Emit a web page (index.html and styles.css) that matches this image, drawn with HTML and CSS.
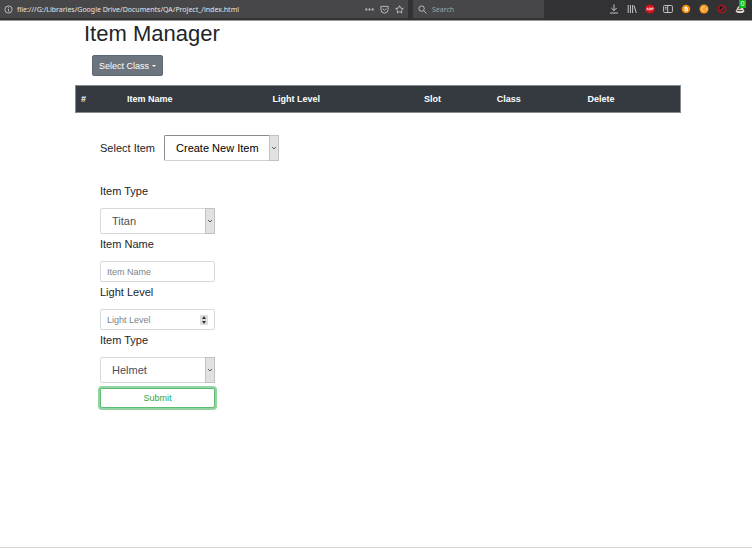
FILE: index.html
```html
<!DOCTYPE html>
<html lang="en">
<head>
<meta charset="utf-8">
<title>Item Manager</title>
<link rel="stylesheet" href="styles.css">
</head>
<body>
<header class="toolbar">
  <div class="address">
    <svg class="icon" viewBox="0 0 10 10" aria-hidden="true"><circle cx="5" cy="5" r="4"/><path d="M5 4.5v2.8M5 2.6v1"/></svg>
    <input class="url" type="text" aria-label="Address" value="file:///G:/Libraries/Google Drive/Documents/QA/Project_/index.html">
    <div class="actions">
      <button type="button" aria-label="Page actions"><svg class="icon" viewBox="0 0 10 10"><path class="solid" d="M.5 4h2v2h-2zM4 4h2v2H4zM7.500 4h2v2h-2z"/></svg></button>
      <button type="button" aria-label="Save to Pocket"><svg class="icon" viewBox="0 0 10 10"><path d="M1 1.500h8v3.500a4 4 0 0 1-8 0zM3 4l2 2 2-2"/></svg></button>
      <button type="button" aria-label="Bookmark"><svg class="icon" viewBox="0 0 10 10"><path d="M5 .8l1.300 2.700 2.900.4-2.100 2 .5 2.900L5 7.400 2.400 8.800l.5-2.900-2.100-2 2.900-.4z"/></svg></button>
    </div>
  </div>
  <label class="search">
    <svg class="icon" viewBox="0 0 10 10" aria-hidden="true"><circle cx="4" cy="4" r="3"/><path d="M6.200 6.200l3.200 3.200"/></svg>
    <input class="query" type="text" placeholder="Search" aria-label="Search">
  </label>
  <nav class="tools">
    <button type="button" aria-label="Downloads"><svg class="icon" viewBox="0 0 10 10"><path d="M5 .5v6M2.300 4L5 6.700 7.700 4M1 9h8"/></svg></button>
    <button type="button" aria-label="Library"><svg class="icon" viewBox="0 0 10 10"><path d="M1.200 1v8M3.400 1v8M5.600 1v8M7 1.500l2.300 7.500"/></svg></button>
    <button type="button" aria-label="Ad blocker"><svg class="icon" viewBox="0 0 10 10"><path fill="#d8121c" stroke="none" d="M3 .8h4L9.500 3v4L7 9.200H3L.5 7V3z"/><path stroke="#fff" stroke-width=".7" d="M1.700 6.200l.8-2.400.8 2.400M4.200 3.900v2.200h.7c1 0 1-2.200 0-2.200zM6.700 6.300V3.900h1c.8 0 .8 1.200 0 1.200h-1"/></svg></button>
    <button type="button" aria-label="Sidebar"><svg class="icon" viewBox="0 0 10 10"><rect x=".6" y="1.500" width="8.800" height="7" rx="1"/><path d="M4.700 1.500v7M2 3.500h1.500M2 5h1.500"/></svg></button>
    <button type="button" aria-label="Orange extension"><svg class="icon" viewBox="0 0 10 10"><circle cx="5" cy="5" r="4.300" fill="#f58a0b" stroke="none"/><path fill="#fff" stroke="none" d="M3.500 2.800h2L7 4.200v3H3.500z"/><circle cx="5.200" cy="5.200" r=".8" fill="#f58a0b" stroke="none"/></svg></button>
    <button type="button" aria-label="Cookie extension"><svg class="icon" viewBox="0 0 10 10"><circle cx="5" cy="5" r="4.500" fill="#f39a24" stroke="none"/><path stroke="#ffe3b5" d="M5.500 3.200a2 2 0 1 0 0 3.600M6.500 5h1.800"/></svg></button>
    <button type="button" aria-label="Blocked content"><svg class="icon" viewBox="0 0 10 10"><ellipse cx="5" cy="5" rx="4" ry="3.600" stroke="#b4101a" stroke-width="1.300"/><path stroke="#b4101a" stroke-width="1.300" d="M2 7l6-4"/><path fill="#090909" stroke="none" d="M3 3h2.500L3 5.500z"/></svg></button>
    <button type="button" class="badged" aria-label="Notifications"><svg class="icon" viewBox="0 0 10 10"><path fill="#ddd6cd" stroke="none" d="M.5 7.500L3 2.500l4-1 2.500 6-2 1.500h-5z"/><path stroke="#4a4038" d="M2 6.500h5.500M3.500 4.500L6 4"/></svg><span class="badge">0</span></button>
  </nav>
</header>
<main class="page">
  <h1>Item Manager</h1>
  <button type="button" class="dropdown">Select Class<span class="caret"></span></button>
  <table class="items">
    <colgroup><col class="c-num"><col class="c-name"><col class="c-light"><col class="c-slot"><col class="c-class"><col class="c-delete"></colgroup>
    <thead><tr><th>#</th><th>Item Name</th><th>Light Level</th><th>Slot</th><th>Class</th><th>Delete</th></tr></thead>
  </table>
  <form class="editor">
    <div class="chooser">
      <label for="item">Select Item</label>
      <div class="select native">
        <select id="item"><option>Create New Item</option></select>
        <svg class="arrow" viewBox="0 0 8 24" aria-hidden="true"><path d="M2 11l2 2 2-2"/></svg>
      </div>
    </div>
    <label for="guardian">Item Type</label>
    <div class="select">
      <select id="guardian"><option>Titan</option></select>
      <svg class="arrow" viewBox="0 0 8 24" aria-hidden="true"><path d="M2 11l2 2 2-2"/></svg>
    </div>
    <label for="name">Item Name</label>
    <input class="field" id="name" type="text" placeholder="Item Name">
    <label for="light">Light Level</label>
    <div class="number">
      <input class="field" id="light" type="number" placeholder="Light Level">
      <svg class="spin" viewBox="0 0 8 10" aria-hidden="true"><path class="plate" d="M0 0h8v10H0z"/><path d="M2 4l2-3 2 3zM2 6l2 3 2-3z"/></svg>
    </div>
    <label for="slot">Item Type</label>
    <div class="select">
      <select id="slot"><option>Helmet</option></select>
      <svg class="arrow" viewBox="0 0 8 24" aria-hidden="true"><path d="M2 11l2 2 2-2"/></svg>
    </div>
    <button type="button" class="submit">Submit</button>
  </form>
</main>
</body>
</html>
```
FILE: styles.css
```css
* { box-sizing: border-box; }
body {
  margin: 0;
  min-height: 100vh;
  display: flex;
  flex-direction: column;
  background: #fff;
  border-bottom: 1px solid #dcd6d4;
  color: #212529;
  font-family: "Liberation Sans", Arial, sans-serif;
  font-size: 11px;
}
button, input, select { font: inherit; margin: 0; }

.toolbar {
  display: flex;
  height: 21px;
  padding-bottom: 2px;
  background: #323234;
  border-bottom: 1px solid #98989a;
  color: #d0d0d2;
  font-family: "Noto Sans", "Open Sans", sans-serif;
  font-size: 7px;
}
.address, .search {
  display: flex;
  align-items: center;
  background: #474749;
}
.address { flex: 0 0 408px; padding: 0 4px; gap: 4px; }
.search { flex: 0 0 131px; margin-left: 5px; padding: 0 5px; gap: 5px; }
.url, .query {
  flex: 1;
  min-width: 0;
  padding: 0;
  border: 0;
  background: none;
  color: #e4e4e6;
}
.query::placeholder { color: #a2a2a4; opacity: 1; }
.icon {
  display: block;
  width: 9px;
  height: 9px;
  flex: none;
  fill: none;
  stroke: #c4c4c6;
}
.icon .solid { fill: #c4c4c6; stroke: none; }
.toolbar button { padding: 0; border: 0; background: none; }
.actions { display: flex; gap: 6px; }
.tools {
  display: flex;
  align-items: center;
  gap: 8px;
  margin-left: auto;
  padding-right: 7px;
}
.tools .icon { width: 10px; height: 10px; }
.toolbar .badged { position: relative; }
.badge {
  position: absolute;
  top: -4px;
  right: -1px;
  width: 7px;
  background: #08c018;
  color: #fff;
  line-height: 8px;
}

.page { padding: 0 71px 0 75px; }
h1 {
  margin: 0 0 8px;
  padding-left: 9px;
  font-size: 22px;
  font-weight: 400;
  line-height: 26px;
}
.dropdown {
  display: flex;
  align-items: center;
  gap: 3px;
  height: 21px;
  margin-left: 17px;
  padding: 0 6px;
  border: 1px solid #5f6973;
  border-radius: 2px;
  background: #6c757d;
  color: #fff;
  font-size: 9px;
}
.caret {
  border: 2px solid transparent;
  border-top-color: #fff;
  border-bottom: 0;
}
.items {
  width: 100%;
  margin-top: 9px;
  table-layout: fixed;
  border-collapse: collapse;
  background: #343a40;
  outline: 1px solid #858b90;
  outline-offset: -1px;
  color: #fff;
  font-size: 9px;
}
.items th { height: 28px; padding: 0 0 0 6px; text-align: left; }
.c-num { width: 46px; }
.c-name { width: 24%; }
.c-light { width: 25%; }
.c-slot { width: 12%; }
.c-class { width: 15%; }

.editor {
  display: flex;
  flex-direction: column;
  align-items: flex-start;
  padding: 22px 0 0 25px;
}
.chooser {
  display: flex;
  align-items: center;
  gap: 9px;
  margin-bottom: 20px;
}
.editor label { line-height: 21px; }
.editor > label { margin-bottom: 6px; }
.select, .number { position: relative; width: 115px; }
select {
  display: block;
  width: 100%;
  height: 26px;
  padding: 0 11px;
  appearance: none;
  border: 1px solid #d6dadf;
  border-radius: 2px;
  background: #fff;
  color: #495057;
}
.native select {
  border-color: #8b8b8b #d0d0d0 #d0d0d0 #8b8b8b;
  color: #000;
}
.arrow {
  position: absolute;
  top: 0;
  right: 0;
  width: 10px;
  height: 26px;
  border: 1px solid #c2c2c2;
  background: #e1e1e1;
  fill: none;
  stroke: #606060;
  pointer-events: none;
}
.field {
  display: block;
  width: 115px;
  height: 21px;
  padding: 0 6px;
  border: 1px solid #d6dadf;
  border-radius: 2px;
  background: #fff;
  color: #495057;
  font-size: 9px;
  appearance: textfield;
}
.field::placeholder { color: #7b838a; opacity: 1; }
.spin {
  position: absolute;
  top: 6px;
  right: 7px;
  width: 8px;
  height: 10px;
  fill: #333;
  pointer-events: none;
}
.plate { fill: #dedede; }
.submit {
  width: 115px;
  height: 20px;
  margin-top: 5px;
  padding: 0;
  border: 1px solid #5cbd72;
  border-radius: 2px;
  background: #fff;
  box-shadow: 0 0 0 2px #94d3a2;
  color: #28a745;
  font-size: 9px;
}
```
